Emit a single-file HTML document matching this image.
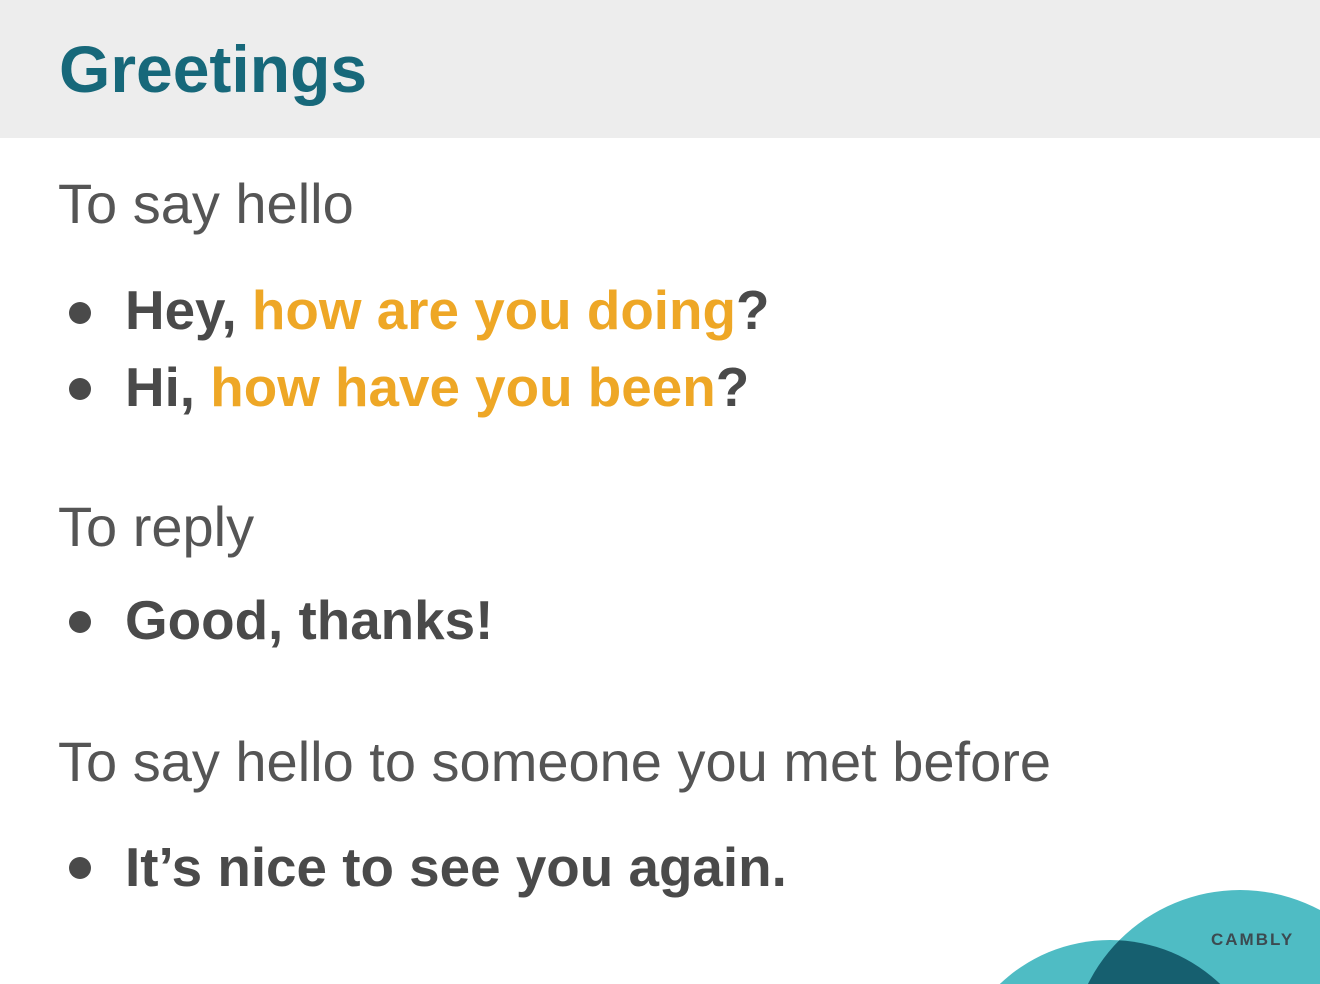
<!DOCTYPE html>
<html><head><meta charset="utf-8"><style>
html,body{margin:0;padding:0;width:1320px;height:984px;overflow:hidden;background:#fff;font-family:"Liberation Sans",Arial,sans-serif;position:relative;}
.hdr{position:absolute;left:0;top:0;width:1320px;height:138px;background:#ededed;}
.t{position:absolute;white-space:nowrap;line-height:54px;font-size:56px;}
.n{color:#555;}
.b{color:#4a4a4a;font-weight:bold;font-size:54.8px;}
.o{color:#eea726;}
.dot{position:absolute;width:22px;height:22px;border-radius:50%;background:#4a4a4a;left:69px;}
</style></head><body>
<div class="hdr"></div>
<div class="t" style="left:59px;top:37px;font-size:66px;line-height:65px;font-weight:bold;color:#17687a;">Greetings</div>
<div class="t n" style="left:58px;top:177px;">To say hello</div>
<div class="dot" style="top:302px"></div>
<div class="t b" style="left:125px;top:283px;">Hey, <span class="o">how are you doing</span>?</div>
<div class="dot" style="top:378px"></div>
<div class="t b" style="left:125px;top:360px;">Hi, <span class="o">how have you been</span>?</div>
<div class="t n" style="left:58px;top:500px;">To reply</div>
<div class="dot" style="top:611px"></div>
<div class="t b" style="left:125px;top:593px;">Good, thanks!</div>
<div class="t n" style="left:58px;top:735px;">To say hello to someone you met before</div>
<div class="dot" style="top:857px"></div>
<div class="t b" style="left:125px;top:840px;">It’s nice to see you again.</div>
<svg style="position:absolute;left:0;top:0;display:block" width="1320" height="984" viewBox="0 0 1320 984">
<defs><clipPath id="c"><circle cx="1240" cy="1060" r="170"/></clipPath></defs>
<circle cx="1240" cy="1060" r="170" fill="#4fbcc4"/>
<circle cx="1110" cy="1100" r="160" fill="#4fbcc4"/>
<circle cx="1110" cy="1100" r="160" fill="#165f6f" clip-path="url(#c)"/>
<text x="1211" y="945" font-family="Liberation Sans, sans-serif" font-weight="bold" font-size="17" letter-spacing="2" fill="#3c4a50">CAMBLY</text>
</svg>
</body></html>
